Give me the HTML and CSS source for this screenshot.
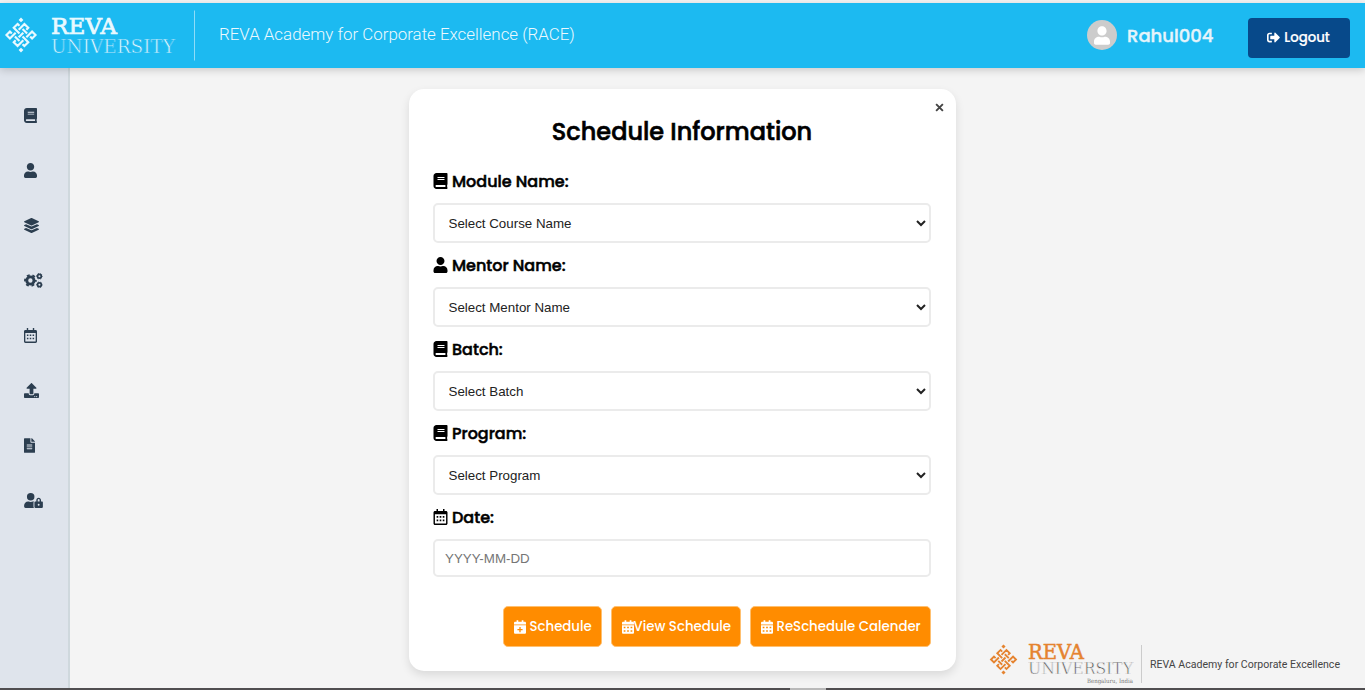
FILE: index.html
```html
<!DOCTYPE html>
<html lang="en">
<head>
<meta charset="utf-8">
<title>Schedule Information</title>
<link rel="stylesheet" href="styles.css">
</head>
<body>
<svg class="sprite" aria-hidden="true">
  <symbol id="book" viewBox="0 0 448 512"><path d="M448 360V24c0-13.300-10.700-24-24-24H96C43 0 0 43 0 96v320c0 53 43 96 96 96h328c13.300 0 24-10.700 24-24v-16c0-7.500-3.500-14.300-8.900-18.700-4.200-15.400-4.200-59.300 0-74.700 5.400-4.300 8.900-11.100 8.900-18.600zM128 134c0-3.300 2.700-6 6-6h212c3.300 0 6 2.700 6 6v20c0 3.300-2.700 6-6 6H134c-3.300 0-6-2.700-6-6v-20zm0 64c0-3.300 2.700-6 6-6h212c3.300 0 6 2.700 6 6v20c0 3.300-2.700 6-6 6H134c-3.300 0-6-2.700-6-6v-20zm253.400 250H96c-17.700 0-32-14.300-32-32 0-17.600 14.400-32 32-32h285.400c-1.900 17.100-1.900 46.900 0 64z"/></symbol>
  <symbol id="user" viewBox="0 0 448 512"><path d="M224 256c70.700 0 128-57.300 128-128S294.700 0 224 0 96 57.300 96 128s57.300 128 128 128zm89.600 32h-16.700c-22.200 10.200-46.900 16-72.900 16s-50.600-5.800-72.900-16h-16.700C60.200 288 0 348.200 0 422.400V464c0 26.500 21.500 48 48 48h352c26.500 0 48-21.500 48-48v-41.600c0-74.200-60.200-134.400-134.400-134.400z"/></symbol>
  <symbol id="layers" viewBox="0 0 512 512"><path d="M12.400 148l233 105.700c6.800 3.100 14.500 3.100 21.300 0L499.600 148c16.500-7.500 16.500-32.500 0-40L266.700 2.300a25.600 25.600 0 0 0-21.300 0L12.400 108c-16.500 7.500-16.500 32.500 0 40zm487.200 88.300L441.500 210l-161.600 73.200a57.800 57.800 0 0 1-47.800 0L70.500 210l-58.100 26.300c-16.500 7.500-16.500 32.500 0 40l233 105.600c6.800 3.100 14.500 3.100 21.300 0l232.900-105.600c16.500-7.500 16.500-32.500 0-40zm0 127.800l-57.900-26.200-161.800 73.300a57.800 57.800 0 0 1-47.800 0L70.300 337.900l-57.900 26.200c-16.500 7.500-16.500 32.500 0 40l233 105.600c6.800 3.100 14.500 3.100 21.300 0l232.900-105.600c16.500-7.500 16.500-32.500 0-40z"/></symbol>
  <symbol id="cogs" viewBox="0 0 640 512">
    <circle cx="214" cy="256" r="124" fill="none" stroke="currentColor" stroke-width="100"/>
    <circle cx="214" cy="256" r="184" fill="none" stroke="currentColor" stroke-width="64" stroke-dasharray="96.340" stroke-dashoffset="48"/>
    <circle cx="522" cy="110" r="64" fill="none" stroke="currentColor" stroke-width="58"/>
    <circle cx="522" cy="110" r="96" fill="none" stroke="currentColor" stroke-width="30" stroke-dasharray="50.270" stroke-dashoffset="25"/>
    <circle cx="522" cy="402" r="64" fill="none" stroke="currentColor" stroke-width="58"/>
    <circle cx="522" cy="402" r="96" fill="none" stroke="currentColor" stroke-width="30" stroke-dasharray="50.270" stroke-dashoffset="25"/>
  </symbol>
  <symbol id="calendar" viewBox="0 0 448 512"><path fill-rule="evenodd" d="M96 0h48v64h160V0h48v64h48c27 0 48 21 48 48v352c0 27-21 48-48 48H48c-27 0-48-21-48-48V112c0-27 21-48 48-48h48zM46 168v290c0 4 3 7 7 7h342c4 0 7-3 7-7V168zM100 224h52v52h-52zM198 224h52v52h-52zM296 224h52v52h-52zM100 336h52v52h-52zM198 336h52v52h-52zM296 336h52v52h-52z"/></symbol>
  <symbol id="calendar-solid" viewBox="0 0 448 512"><path fill-rule="evenodd" d="M96 0h64v64h128V0h64v64h48c27 0 48 21 48 48v48H0v-48c0-27 21-48 48-48h48zM0 192h448v272c0 27-21 48-48 48H48c-27 0-48-21-48-48zM64 250v54h64v-54zM192 250v54h64v-54zM320 250v54h64v-54zM64 380v54h64v-54zM192 380v54h64v-54zM320 380v54h64v-54z"/></symbol>
  <symbol id="calendar-plus" viewBox="0 0 448 512"><path fill-rule="evenodd" d="M96 0h64v64h128V0h64v64h48c27 0 48 21 48 48v48H0v-48c0-27 21-48 48-48h48zM0 192h448v272c0 27-21 48-48 48H48c-27 0-48-21-48-48zM200 256v72h-72v48h72v72h48v-72h72v-48h-72v-72z"/></symbol>
  <symbol id="upload" viewBox="0 0 512 512"><path d="M296 384h-80c-13.300 0-24-10.700-24-24V192h-87.700c-17.800 0-26.700-21.500-14.100-34.100L242.300 5.700c7.500-7.500 19.800-7.500 27.300 0l152.200 152.200c12.600 12.600 3.700 34.100-14.100 34.100H320v168c0 13.300-10.700 24-24 24zm216-8v112c0 13.300-10.700 24-24 24H24c-13.300 0-24-10.700-24-24V376c0-13.300 10.700-24 24-24h136v8c0 30.900 25.100 56 56 56h80c30.900 0 56-25.100 56-56v-8h136c13.300 0 24 10.700 24 24zm-124 88c0-11-9-20-20-20s-20 9-20 20 9 20 20 20 20-9 20-20zm64 0c0-11-9-20-20-20s-20 9-20 20 9 20 20 20 20-9 20-20z"/></symbol>
  <symbol id="file" viewBox="0 0 384 512"><path d="M224 136V0H24C10.700 0 0 10.700 0 24v464c0 13.300 10.700 24 24 24h336c13.300 0 24-10.700 24-24V160H248c-13.200 0-24-10.800-24-24zm64 236c0 6.600-5.400 12-12 12H108c-6.600 0-12-5.400-12-12v-8c0-6.600 5.400-12 12-12h168c6.600 0 12 5.400 12 12v8zm0-64c0 6.600-5.400 12-12 12H108c-6.600 0-12-5.400-12-12v-8c0-6.600 5.400-12 12-12h168c6.600 0 12 5.400 12 12v8zm0-72v8c0 6.600-5.400 12-12 12H108c-6.600 0-12-5.400-12-12v-8c0-6.600 5.400-12 12-12h168c6.600 0 12 5.400 12 12zm96-114.100v6.100H256V0h6.100c6.400 0 12.500 2.500 17 7l97.900 98c4.500 4.500 7 10.600 7 16.900z"/></symbol>
  <symbol id="user-lock" viewBox="0 0 640 512"><path fill-rule="evenodd" d="M224 256a128 128 0 1 0 0-256 128 128 0 0 0 0 256zM134 288h17c45 21 101 21 146 0h17l28 3c-14 10-22 26-22 45v128c0 18 6 34 16 48H48c-27 0-48-21-48-48v-42c0-74 60-134 134-134zM608 288h-32v-48c0-44-36-80-80-80s-80 36-80 80v48h-32c-18 0-32 14-32 32v160c0 18 14 32 32 32h224c18 0 32-14 32-32V320c0-18-14-32-32-32zM496 432a32 32 0 1 1 0-64 32 32 0 0 1 0 64zM528 288h-64v-48a32 32 0 0 1 64 0z"/></symbol>
  <symbol id="logout" viewBox="0 0 512 512"><path d="M497 273L329 441c-15 15-41 4.500-41-17v-96H152c-13.300 0-24-10.700-24-24v-96c0-13.300 10.700-24 24-24h136V88c0-21.400 25.900-32 41-17l168 168c9.300 9.400 9.300 24.600 0 34zM192 436v-40c0-6.600-5.400-12-12-12H96c-17.700 0-32-14.300-32-32V160c0-17.700 14.300-32 32-32h84c6.600 0 12-5.400 12-12V76c0-6.600-5.400-12-12-12H96c-53 0-96 43-96 96v192c0 53 43 96 96 96h84c6.600 0 12-5.400 12-12z"/></symbol>
  <symbol id="knot" viewBox="-18 -18 36 36">
    <g transform="rotate(45) scale(1.080)" fill="none" stroke="currentColor" stroke-width="2">
      <path d="M-5 -2V-9.500H0V-7M5 -2V-9.500H9.500V-5H7M5 2V9.500H0V7M-5 2V9.500H-9.500V5H-7M0 -3V3"/>
      <path d="M-7 -5H-9.500V0H-2M-3 -5H3M2 0H9.500V5H7M-3 5H3"/>
    </g>
    <path d="M0 -17.500l2.400 2.400-2.400 2.400-2.400-2.400zM0 12.700l2.400 2.400-2.400 2.400-2.400-2.400z" fill="currentColor"/>
  </symbol>
</svg>

<header class="topbar">
  <svg class="brand" viewBox="0 0 200 65">
    <use href="#knot" x="3" y="14" width="36" height="36"/>
    <text class="brand-reva" x="51" y="31" textLength="66" lengthAdjust="spacingAndGlyphs">REVA</text>
    <text class="brand-univ" x="51" y="50" textLength="124" lengthAdjust="spacingAndGlyphs">UNIVERSITY</text>
    <path d="M194.500 7.500v50" stroke="#8fdcf8"/>
  </svg>
  <span class="academy">REVA Academy for Corporate Excellence (RACE)</span>
  <div class="account">
    <span class="avatar"><svg class="icon-avatar"><use href="#user"/></svg></span>
    <span class="username">Rahul004</span>
    <button class="logout"><svg class="icon-13"><use href="#logout"/></svg><span>Logout</span></button>
  </div>
</header>

<div class="body">
  <nav class="sidebar">
    <a><svg class="w14"><use href="#book"/></svg></a>
    <a><svg class="w14"><use href="#user"/></svg></a>
    <a><svg class="w15"><use href="#layers"/></svg></a>
    <a><svg class="w19"><use href="#cogs"/></svg></a>
    <a><svg class="w14"><use href="#calendar"/></svg></a>
    <a><svg class="w15"><use href="#upload"/></svg></a>
    <a><svg class="w12"><use href="#file"/></svg></a>
    <a><svg class="w19"><use href="#user-lock"/></svg></a>
  </nav>
  <main class="content">
    <form class="card">
      <button type="button" class="close" aria-label="Close"><svg viewBox="0 0 8 8"><path d="M1 1l6 6M7 1L1 7"/></svg></button>
      <h1>Schedule Information</h1>
      <label><svg><use href="#book"/></svg><span>Module Name:</span></label>
      <select><option>Select Course Name</option></select>
      <label><svg><use href="#user"/></svg><span>Mentor Name:</span></label>
      <select><option>Select Mentor Name</option></select>
      <label><svg><use href="#book"/></svg><span>Batch:</span></label>
      <select><option>Select Batch</option></select>
      <label><svg><use href="#book"/></svg><span>Program:</span></label>
      <select><option>Select Program</option></select>
      <label><svg><use href="#calendar"/></svg><span>Date:</span></label>
      <input type="text" placeholder="YYYY-MM-DD">
      <div class="actions">
        <button type="button" class="b-schedule"><svg><use href="#calendar-plus"/></svg><span>Schedule</span></button>
        <button type="button" class="b-view"><svg><use href="#calendar-solid"/></svg><span>View Schedule</span></button>
        <button type="button" class="b-reschedule"><svg><use href="#calendar-solid"/></svg><span>ReSchedule Calender</span></button>
      </div>
    </form>
    <svg class="footer-brand" viewBox="0 0 365 45">
      <use class="orange" href="#knot" x="-12" y="1" width="31" height="31"/>
      <text class="foot-reva" x="28" y="16" textLength="56" lengthAdjust="spacingAndGlyphs">REVA</text>
      <text class="foot-univ" x="28" y="31" textLength="105" lengthAdjust="spacingAndGlyphs">UNIVERSITY</text>
      <text class="foot-city" x="87" y="40" textLength="46" lengthAdjust="spacingAndGlyphs">Bengaluru, India</text>
      <path d="M141.500 2v38" stroke="#ccc"/>
      <text class="foot-academy" x="150" y="25" textLength="190" lengthAdjust="spacingAndGlyphs">REVA Academy for Corporate Excellence</text>
    </svg>
  </main>
</div>
<div class="scrollbar"><span></span></div>
</body>
</html>
```
FILE: styles.css
```css
* { box-sizing: border-box; }
body {
  margin: 0;
  height: 690px;
  padding-top: 3px;
  display: flex;
  flex-direction: column;
  overflow: hidden;
  background: #f4f4f4;
  font-family: Poppins, Inter, sans-serif;
}
button { font-family: inherit; border: 0; cursor: pointer; }
svg { fill: currentColor; display: block; flex: none; }
.sprite { position: absolute; width: 0; height: 0; }

.topbar {
  height: 65px;
  flex: none;
  display: flex;
  align-items: center;
  background: #1cbaf1;
  color: #fff;
  box-shadow: 0 2px 8px rgba(0, 0, 0, .18);
  position: relative;
  z-index: 1;
}
.brand { width: 200px; height: 65px; color: #e9f9ff; }
.brand-reva { font: 22px "DejaVu Serif", serif; stroke: currentColor; stroke-width: .7; }
.brand-univ { font: 18.500px "DejaVu Serif", serif; fill: #e2f7fe; stroke: #1cbaf1; stroke-width: .6; }
.academy { margin: -3px 0 0 19px; font: 300 16.900px Roboto, sans-serif; color: #ecf9fe; }
.account { margin-left: auto; display: flex; align-items: center; padding: 4px 15px 0 0; }
.avatar {
  width: 30px; height: 30px;
  margin-top: -5px;
  border-radius: 50%;
  background: #ccc;
  display: grid;
  place-items: center;
}
.icon-avatar { width: 16px; height: 19px; }
.username { width: 131px; margin-top: -5px; padding-left: 10px; font-size: 18px; font-weight: 500; color: #e6f4fb; -webkit-text-stroke: .4px; }
.logout {
  width: 102px; height: 40px;
  border-radius: 4px;
  background: #07498a;
  color: #fff;
  display: flex;
  align-items: center;
  justify-content: center;
  gap: 4px;
  font-size: 13.300px;
  font-weight: 500;
  padding: 0 1px 0 0;
  -webkit-text-stroke: .2px;
}
.icon-13 { width: 13px; height: 13px; }

.body { flex: 1; display: flex; min-height: 0; }
.sidebar {
  width: 70px;
  border-right: 2px solid #cfd8dd;
  background: #dfe4ec;
  padding: 20px 0 0 24px;
  color: #2c3e50;
}
.sidebar a { display: flex; align-items: center; height: 55px; }
.sidebar svg { height: 15px; }
.w12 { width: 11px; }
.w14 { width: 13px; }
.w15 { width: 15px; }
.w19 { width: 19px; }

.content { flex: 1; position: relative; padding: 21px 0 0 338.500px; }
.card {
  position: relative;
  width: 547px;
  height: 582px;
  padding: 25px 24.500px 0;
  border-radius: 15px;
  background: #fff;
  box-shadow: 0 4px 10px rgba(0, 0, 0, .11);
  display: flex;
  flex-direction: column;
}
.close {
  position: absolute;
  top: 14px; right: 12px;
  width: 9px; height: 9px;
  padding: 0;
  background: none;
}
.close svg { width: 9px; height: 9px; stroke: #444; stroke-width: 1.700; fill: none; }
h1 { margin: 0 0 19px; height: 36px; line-height: 36px; text-align: center; font-size: 24px; font-weight: 500; color: #000; white-space: nowrap; -webkit-text-stroke: .6px; }
label { height: 24px; display: flex; align-items: center; gap: 4px; font-size: 16px; font-weight: 500; color: #000; margin-top: 10px; -webkit-text-stroke: .5px; }
h1 + label { margin-top: 0; }
label svg { width: 15px; height: 16px; }
select, input {
  width: 498px;
  height: 40px;
  margin: 10px 0 0;
  border: 2px solid #ebebeb;
  border-radius: 5px;
  background: #fff;
  font: 13.333px "Liberation Sans", Arial, sans-serif;
  color: #222;
}
select { padding: 0 0 0 9.500px; }
input { height: 38px; padding: 0 10px; }
input::placeholder { color: #757575; }
.actions { margin-top: 29px; display: flex; justify-content: flex-end; gap: 9px; }
.actions button {
  height: 41px;
  padding: 0 0 0 9.500px;
  border: 1px solid #ffc070;
  border-radius: 5px;
  background: #ff8c00;
  color: #fff;
  display: flex;
  align-items: center;
  font-size: 13.300px;
  font-weight: 500;
  white-space: nowrap;
}
.actions svg { width: 12px; height: 14px; }
.b-schedule { width: 99px; gap: 4px; }
.b-view { width: 130px; }
.b-reschedule { width: 181px; gap: 4px; }

.footer-brand { position: absolute; left: 930px; top: 575px; width: 365px; height: 45px; overflow: visible; }
.orange { color: #e5832f; }
.foot-reva { font: 20px "DejaVu Serif", serif; fill: #e5832f; stroke: #e5832f; stroke-width: .5; }
.foot-univ { font: 16.500px "DejaVu Serif", serif; fill: #555; stroke: #f4f4f4; stroke-width: .6; }
.foot-city { font: 6px "DejaVu Serif", serif; fill: #777; }
.foot-academy { font: 10.500px Roboto, sans-serif; fill: #444; }

.scrollbar { height: 2px; flex: none; background: #504e50; }
.scrollbar span { display: block; width: 36px; height: 2px; margin-left: 790px; background: #b9b9b9; }
```
